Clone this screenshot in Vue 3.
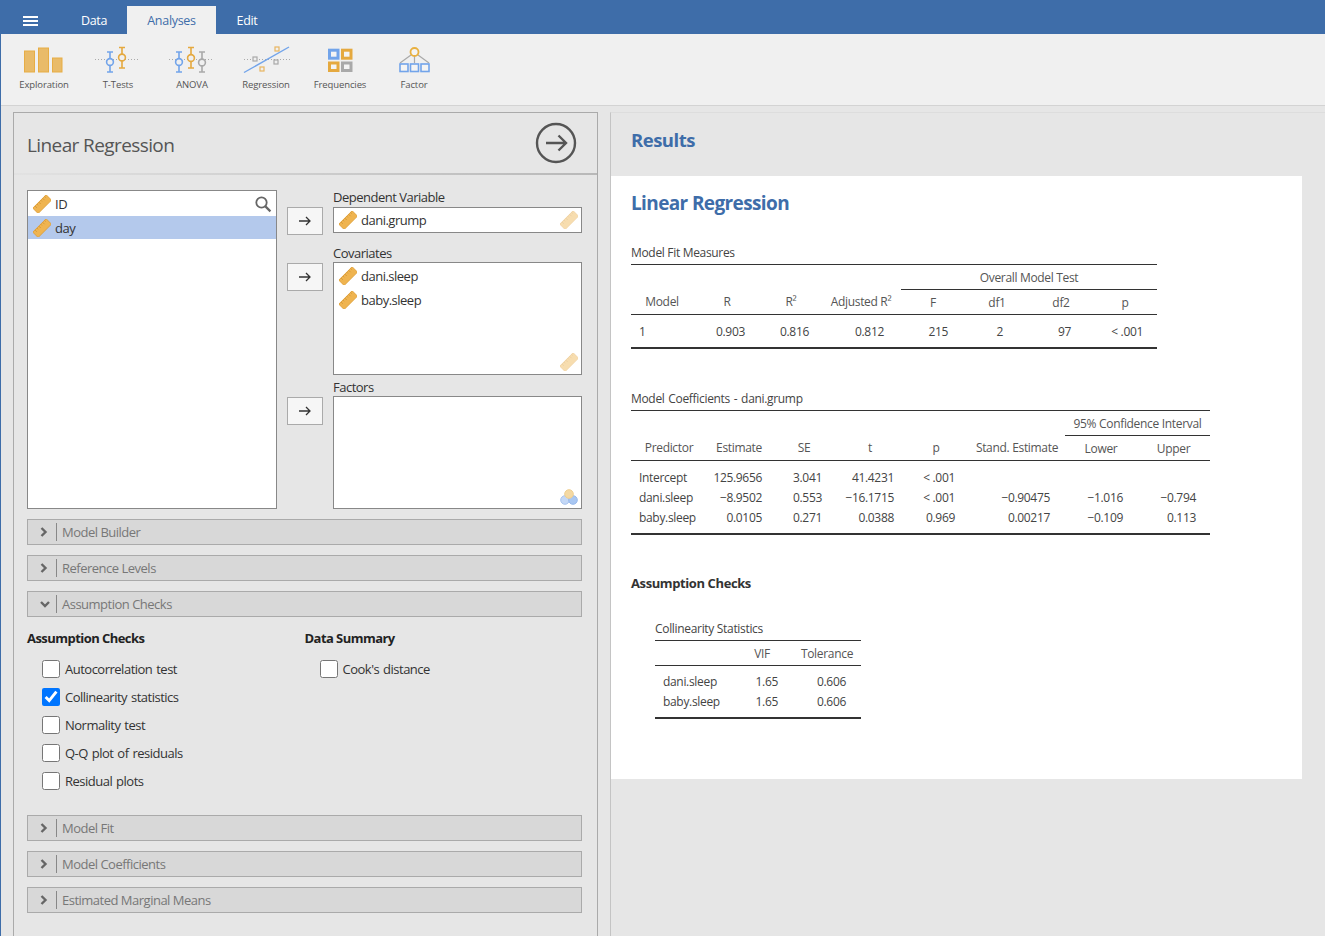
<script setup>
const ribbon = ["Exploration", "T-Tests", "ANOVA", "Regression", "Frequencies", "Factor"];

const assumptionOptions = [
    { label: "Autocorrelation test", checked: false },
    { label: "Collinearity statistics", checked: true },
    { label: "Normality test", checked: false },
    { label: "Q-Q plot of residuals", checked: false },
    { label: "Residual plots", checked: false },
];

// w = column width, pad = distance of the numbers from the right edge
const fitCols = [
    { name: "Model", w: 62, left: true },
    { name: "R", w: 68, pad: 16 },
    { name: "R²", w: 60, pad: 12 },
    { name: "Adjusted R²", w: 80, pad: 17 },
    { name: "F", w: 64, pad: 17 },
    { name: "df1", w: 64, pad: 26 },
    { name: "df2", w: 64, pad: 22 },
    { name: "p", w: 64, pad: 14 },
];
const fitRows = [["1", "0.903", "0.816", "0.812", "215", "2", "97", "< .001"]];

const coefCols = [
    { name: "Predictor", w: 76, left: true },
    { name: "Estimate", w: 64, pad: 9 },
    { name: "SE", w: 66, pad: 15 },
    { name: "t", w: 66, pad: 9 },
    { name: "p", w: 66, pad: 14 },
    { name: "Stand. Estimate", w: 96, pad: 15 },
    { name: "Lower", w: 72, pad: 14 },
    { name: "Upper", w: 73, pad: 14 },
];
const coefRows = [
    ["Intercept", "125.9656", "3.041", "41.4231", "< .001", "", "", ""],
    ["dani.sleep", "−8.9502", "0.553", "−16.1715", "< .001", "−0.90475", "−1.016", "−0.794"],
    ["baby.sleep", "0.0105", "0.271", "0.0388", "0.969", "0.00217", "−0.109", "0.113"],
];

const colliCols = [
    { name: "", w: 76, left: true },
    { name: "VIF", w: 62, pad: 15 },
    { name: "Tolerance", w: 68, pad: 15 },
];
const colliRows = [
    ["dani.sleep", "1.65", "0.606"],
    ["baby.sleep", "1.65", "0.606"],
];

function tableWidth(cols) {
    return cols.reduce((sum, c) => sum + c.w, 0) + "px";
}

function cellStyle(col) {
    return col.left ? {} : { paddingRight: col.pad + "px" };
}
</script>

<template>
    <svg class="defs" width="0" height="0">
        <defs>
            <g id="ruler">
                <g transform="rotate(-45 9 9)">
                    <rect x="-1.5" y="5" width="21" height="8.4" fill="#efb450" stroke="#e0a038" />
                    <path d="M2 5v3M5 5v2M8 5v3M11 5v2M14 5v3M17 5v2" stroke="#cf9230" stroke-width="0.8" />
                </g>
            </g>
        </defs>
    </svg>

    <div class="app">
        <div class="topbar">
            <div class="burger"><span></span><span></span><span></span></div>
            <div class="tab tab-data">Data</div>
            <div class="tab tab-analyses">Analyses</div>
            <div class="tab tab-edit">Edit</div>
        </div>

        <div class="ribbon">
            <div v-for="(name, i) in ribbon" :key="name" class="ribbon-btn">
                <svg class="ribbon-icon" width="50" height="32" viewBox="0 0 50 32">
                    <g v-if="i === 0" fill="#e9bb69" stroke="#e7ad45">
                        <rect x="5.5" y="6" width="10" height="21" />
                        <rect x="19.5" y="3" width="10" height="24" />
                        <rect x="33.5" y="13" width="9.5" height="14" />
                    </g>
                    <g v-if="i === 1" fill="none" stroke-width="1.6">
                        <path d="M2 14.5h45" stroke="#aaa" stroke-dasharray="1 2" stroke-width="1" />
                        <g stroke="#72a4ea">
                            <path d="M14 7h6M17 7v20M14 27h6" />
                            <circle cx="17" cy="17" r="3.4" fill="#f0f0f0" />
                        </g>
                        <g stroke="#e5a93f">
                            <path d="M26 2.5h6M29 2.5v20.500M26 23h6" />
                            <circle cx="29" cy="12.500" r="3.4" fill="#f0f0f0" />
                        </g>
                    </g>
                    <g v-if="i === 2" fill="none" stroke-width="1.6">
                        <path d="M2 14.5h45" stroke="#aaa" stroke-dasharray="1 2" stroke-width="1" />
                        <g stroke="#72a4ea">
                            <path d="M9 7h6M12 7v20M9 27h6" />
                            <circle cx="12" cy="17" r="3.4" fill="#f0f0f0" />
                        </g>
                        <g stroke="#e5a93f">
                            <path d="M21 2.500h6M24 2.500v20.500M21 23h6" />
                            <circle cx="24" cy="13" r="3.4" fill="#f0f0f0" />
                        </g>
                        <g stroke="#a9a9a9">
                            <path d="M32 7h6M35 7v20M32 27h6" />
                            <circle cx="35" cy="17.500" r="3.4" fill="#f0f0f0" />
                        </g>
                    </g>
                    <g v-if="i === 3" fill="none">
                        <path d="M3 14.5h46" stroke="#aaa" stroke-dasharray="1 2" />
                        <path d="M3 27.5L48 2" stroke="#72a4ea" stroke-width="1.4" />
                        <rect x="12" y="12" width="4" height="4" stroke="#a9a9a9" fill="#f0f0f0" stroke-width="1.2" />
                        <rect x="33" y="15" width="4" height="4" stroke="#a9a9a9" fill="#f0f0f0" stroke-width="1.2" />
                        <rect x="19" y="22" width="4" height="4" stroke="#e8b560" fill="#f0f0f0" stroke-width="1.2" />
                        <rect x="34" y="2" width="4" height="4" stroke="#e8b560" fill="#f0f0f0" stroke-width="1.2" />
                    </g>
                    <g v-if="i === 4" fill="#f4f4f4" stroke-width="3">
                        <rect x="14.5" y="5.2" width="8.5" height="8" stroke="#72a4ea" />
                        <rect x="27.5" y="5.2" width="8.5" height="8" stroke="#e5a93f" />
                        <rect x="14.5" y="18" width="8.5" height="7.500" stroke="#e5a93f" />
                        <rect x="27.5" y="18" width="8.5" height="7.500" stroke="#a9a9a9" />
                    </g>
                    <g v-if="i === 5" fill="none">
                        <path d="M22 10L11 18M25.500 11v7M29 10l11 8" stroke="#a9a9a9" stroke-width="1.2" />
                        <circle cx="25.500" cy="7" r="4" fill="#f4f4f4" stroke="#e8b040" stroke-width="1.8" />
                        <g fill="#f4f4f4" stroke="#72a4ea" stroke-width="1.6">
                            <rect x="11" y="19" width="8" height="7.500" />
                            <rect x="21.500" y="19" width="8" height="7.500" />
                            <rect x="32" y="19" width="8" height="7.500" />
                        </g>
                    </g>
                </svg>
                <div class="ribbon-label">{{ name }}</div>
            </div>
        </div>

        <div class="main">
            <div class="options">
                <div class="options-head">
                    <h1>Linear Regression</h1>
                    <svg class="go" width="42" height="42" viewBox="0 0 42 42" fill="none" stroke="#555">
                        <circle cx="21" cy="21" r="19" stroke-width="2.4" />
                        <path d="M11 21h20M23.500 13.500l7.500 7.500-7.500 7.500" stroke-width="2.4" />
                    </svg>
                </div>

                <div class="body">
                    <div class="supplier">
                        <div class="source">
                            <div class="var">
                                <svg class="ruler" width="18" height="18" viewBox="-1 -1 20 20"><use href="#ruler" /></svg>
                                <span>ID</span>
                                <svg class="search" width="18" height="18" viewBox="0 0 18 18" fill="none" stroke="#666" stroke-width="1.8">
                                    <circle cx="7.5" cy="7.5" r="5.2" />
                                    <path d="M11.4 11.4l5 5" stroke-width="2.2" />
                                </svg>
                            </div>
                            <div class="var selected">
                                <svg class="ruler" width="18" height="18" viewBox="-1 -1 20 20"><use href="#ruler" /></svg>
                                <span>day</span>
                            </div>
                        </div>

                        <div class="targets">
                            <div class="target-row dependent">
                                <button class="move">
                                    <svg width="14" height="12" viewBox="0 0 14 12" fill="none" stroke="#333" stroke-width="1.3"><path d="M1 6h11M8 2l4 4-4 4" /></svg>
                                </button>
                                <div class="target-col">
                                    <div class="target-label">Dependent Variable</div>
                                    <div class="target one">
                                        <div class="var">
                                            <svg class="ruler" width="18" height="18" viewBox="-1 -1 20 20"><use href="#ruler" /></svg>
                                            <span>dani.grump</span>
                                        </div>
                                        <svg class="hint" width="18" height="18" viewBox="-1 -1 20 20"><use href="#ruler" /></svg>
                                    </div>
                                </div>
                            </div>

                            <div class="target-row covariates">
                                <button class="move">
                                    <svg width="14" height="12" viewBox="0 0 14 12" fill="none" stroke="#333" stroke-width="1.3"><path d="M1 6h11M8 2l4 4-4 4" /></svg>
                                </button>
                                <div class="target-col">
                                    <div class="target-label">Covariates</div>
                                    <div class="target big">
                                        <div class="var">
                                            <svg class="ruler" width="18" height="18" viewBox="-1 -1 20 20"><use href="#ruler" /></svg>
                                            <span>dani.sleep</span>
                                        </div>
                                        <div class="var">
                                            <svg class="ruler" width="18" height="18" viewBox="-1 -1 20 20"><use href="#ruler" /></svg>
                                            <span>baby.sleep</span>
                                        </div>
                                        <svg class="hint" width="18" height="18" viewBox="-1 -1 20 20"><use href="#ruler" /></svg>
                                    </div>
                                </div>
                            </div>

                            <div class="target-row factors">
                                <button class="move">
                                    <svg width="14" height="12" viewBox="0 0 14 12" fill="none" stroke="#333" stroke-width="1.3"><path d="M1 6h11M8 2l4 4-4 4" /></svg>
                                </button>
                                <div class="target-col">
                                    <div class="target-label">Factors</div>
                                    <div class="target big">
                                        <svg class="hint hint-nominal" width="18" height="16" viewBox="0 0 18 16">
                                            <circle cx="5" cy="11" r="4.3" fill="#c4d8f6" stroke="#a9c4ee" />
                                            <circle cx="13" cy="11" r="4.3" fill="#a9c7f2" stroke="#97b9ec" />
                                            <circle cx="9" cy="5" r="4.3" fill="#f4d9a4" stroke="#efcf90" />
                                        </svg>
                                    </div>
                                </div>
                            </div>
                        </div>
                    </div>

                    <div class="section">
                        <svg class="chev" width="10" height="12" viewBox="0 0 10 12" fill="none" stroke="#666" stroke-width="2.4"><path d="M2.5 2l4 4-4 4" /></svg>
                        <span class="section-label">Model Builder</span>
                    </div>
                    <div class="section">
                        <svg class="chev" width="10" height="12" viewBox="0 0 10 12" fill="none" stroke="#666" stroke-width="2.4"><path d="M2.5 2l4 4-4 4" /></svg>
                        <span class="section-label">Reference Levels</span>
                    </div>
                    <div class="section">
                        <svg class="chev" width="12" height="12" viewBox="0 0 12 12" fill="none" stroke="#666" stroke-width="2.4"><path d="M2 4l4 4 4-4" /></svg>
                        <span class="section-label">Assumption Checks</span>
                    </div>

                    <div class="checks">
                        <div class="check-col">
                            <h3>Assumption Checks</h3>
                            <label v-for="opt in assumptionOptions" :key="opt.label" class="check">
                                <input type="checkbox" :checked="opt.checked" />
                                <span>{{ opt.label }}</span>
                            </label>
                        </div>
                        <div class="check-col">
                            <h3>Data Summary</h3>
                            <label class="check">
                                <input type="checkbox" />
                                <span>Cook's distance</span>
                            </label>
                        </div>
                    </div>

                    <div class="section">
                        <svg class="chev" width="10" height="12" viewBox="0 0 10 12" fill="none" stroke="#666" stroke-width="2.4"><path d="M2.5 2l4 4-4 4" /></svg>
                        <span class="section-label">Model Fit</span>
                    </div>
                    <div class="section">
                        <svg class="chev" width="10" height="12" viewBox="0 0 10 12" fill="none" stroke="#666" stroke-width="2.4"><path d="M2.5 2l4 4-4 4" /></svg>
                        <span class="section-label">Model Coefficients</span>
                    </div>
                    <div class="section">
                        <svg class="chev" width="10" height="12" viewBox="0 0 10 12" fill="none" stroke="#666" stroke-width="2.4"><path d="M2.5 2l4 4-4 4" /></svg>
                        <span class="section-label">Estimated Marginal Means</span>
                    </div>
                </div>
            </div>

            <div class="results">
                <div class="results-head">Results</div>
                <div class="sheet">
                    <h2>Linear Regression</h2>

                    <div class="table-title fit-title">Model Fit Measures</div>
                    <table :style="{ width: tableWidth(fitCols) }">
                        <colgroup><col v-for="c in fitCols" :key="c.name" :style="{ width: c.w + 'px' }" /></colgroup>
                        <thead>
                            <tr class="over">
                                <th colspan="4"></th>
                                <th colspan="4" class="spanner">Overall Model Test</th>
                            </tr>
                            <tr>
                                <th v-for="c in fitCols" :key="c.name">{{ c.name }}</th>
                            </tr>
                        </thead>
                        <tbody>
                            <tr v-for="(row, r) in fitRows" :key="r">
                                <td v-for="(v, i) in row" :key="i" :class="{ first: fitCols[i].left }" :style="cellStyle(fitCols[i])">{{ v }}</td>
                            </tr>
                        </tbody>
                    </table>

                    <div class="table-title coef-title">Model Coefficients - dani.grump</div>
                    <table :style="{ width: tableWidth(coefCols) }">
                        <colgroup><col v-for="c in coefCols" :key="c.name" :style="{ width: c.w + 'px' }" /></colgroup>
                        <thead>
                            <tr class="over">
                                <th colspan="6"></th>
                                <th colspan="2" class="spanner">95% Confidence Interval</th>
                            </tr>
                            <tr>
                                <th v-for="c in coefCols" :key="c.name">{{ c.name }}</th>
                            </tr>
                        </thead>
                        <tbody>
                            <tr v-for="(row, r) in coefRows" :key="r">
                                <td v-for="(v, i) in row" :key="i" :class="{ first: coefCols[i].left }" :style="cellStyle(coefCols[i])">{{ v }}</td>
                            </tr>
                        </tbody>
                    </table>

                    <h4>Assumption Checks</h4>

                    <div class="colli">
                        <div class="table-title colli-title">Collinearity Statistics</div>
                        <table :style="{ width: tableWidth(colliCols) }">
                            <colgroup><col v-for="c in colliCols" :key="c.name" :style="{ width: c.w + 'px' }" /></colgroup>
                            <thead>
                                <tr>
                                    <th v-for="c in colliCols" :key="c.name">{{ c.name }}</th>
                                </tr>
                            </thead>
                            <tbody>
                                <tr v-for="(row, r) in colliRows" :key="r">
                                    <td v-for="(v, i) in row" :key="i" :class="{ first: colliCols[i].left }" :style="cellStyle(colliCols[i])">{{ v }}</td>
                                </tr>
                            </tbody>
                        </table>
                    </div>
                </div>
            </div>
        </div>
    </div>
</template>

<style>
html,
body {
    margin: 0;
    height: 936px;
    overflow: hidden;
    background: #e6e6e6;
}
</style>

<style scoped>
.defs {
    position: absolute;
}

.app {
    height: 936px;
    overflow: hidden;
    box-sizing: border-box;
    border-left: 1px solid #3e6da9;
    font-family: "Open Sans", "Noto Sans", sans-serif;
    font-size: 13px;
    letter-spacing: -0.5px;
    color: #333;
    background: #e6e6e6;
}

.topbar {
    margin-left: -1px;
    height: 34px;
    background: #3e6da9;
    display: flex;
    align-items: flex-end;
}

.burger {
    width: 61px;
    height: 34px;
    box-sizing: border-box;
    padding: 16px 0 0 23px;
}

.burger span {
    display: block;
    width: 15px;
    height: 2px;
    margin-bottom: 2px;
    background: #fff;
}

.tab {
    height: 28px;
    line-height: 29px;
    text-align: center;
    color: #fff;
    font-size: 12.5px;
    letter-spacing: -0.3px;
}

.tab-data {
    width: 66px;
}

.tab-analyses {
    width: 89px;
    background: #f0f0f0;
    color: #3e6da9;
}

.tab-edit {
    width: 62px;
}

.ribbon {
    height: 72px;
    box-sizing: border-box;
    padding-left: 6px;
    background: #f0f0f0;
    border-bottom: 1px solid #d3d3d3;
    display: flex;
}

.ribbon-btn {
    width: 74px;
    display: flex;
    flex-direction: column;
    align-items: center;
    padding-top: 11px;
}

.ribbon-icon {
    display: block;
}

.ribbon-label {
    margin-top: 1px;
    font-size: 9.5px;
    line-height: 14px;
    letter-spacing: -0.1px;
    color: #555;
}

.main {
    display: flex;
    padding-top: 6px;
}

.options {
    margin-left: 12px;
    width: 585px;
    height: 830px;
    box-sizing: border-box;
    border: 1px solid #aaa;
    border-bottom: none;
    flex-shrink: 0;
}

.options-head {
    height: 62px;
    box-sizing: border-box;
    padding: 0 20px 0 13px;
    display: flex;
    justify-content: space-between;
    align-items: center;
    border-bottom: 2px solid;
    border-image: linear-gradient(to right, #e2e2e2, #b8b8b8) 1;
}

h1 {
    margin: 4px 0 0;
    font-size: 19px;
    font-weight: 400;
    letter-spacing: -0.6px;
    color: #555;
}

.body {
    padding: 15px 15px 0 13px;
}

.supplier {
    display: flex;
    gap: 10px;
}

.source {
    width: 250px;
    height: 319px;
    box-sizing: border-box;
    border: 1px solid #888;
    background: #fff;
    padding-top: 1px;
}

.var {
    height: 24px;
    display: flex;
    align-items: center;
    padding-left: 5px;
    gap: 4px;
    color: #333;
}

.var.selected {
    height: 23px;
    background: #b4c9ec;
}

.search {
    margin-left: auto;
    margin-right: 4px;
}

.targets {
    width: 295px;
}

.target-row {
    display: flex;
    gap: 10px;
}

.dependent .target-label {
    line-height: 14px;
}

.covariates {
    margin-top: 10px;
}

.factors {
    margin-top: 4px;
}

.move {
    width: 36px;
    height: 28px;
    margin-top: 17px;
    padding: 0;
    box-sizing: border-box;
    border: 1px solid #aaa;
    background: #f6f6f6;
    display: flex;
    align-items: center;
    justify-content: center;
}

.covariates .move,
.factors .move {
    margin-top: 18px;
}

.target-col {
    width: 249px;
}

.target-label {
    height: 17px;
    line-height: 16px;
}

.target {
    position: relative;
    box-sizing: border-box;
    border: 1px solid #888;
    background: #fff;
}

.target.one {
    height: 26px;
}

.target.big {
    height: 113px;
    padding-top: 1px;
}

.hint {
    position: absolute;
    right: 3px;
    bottom: 3px;
    opacity: 0.45;
}

.hint-nominal {
    opacity: 1;
    bottom: 3px;
}

.section {
    height: 26px;
    box-sizing: border-box;
    margin-top: 10px;
    border: 1px solid #aaa;
    background: #d8d8d8;
    display: flex;
    align-items: center;
    position: relative;
    padding-left: 34px;
}

.chev {
    position: absolute;
    left: 11px;
    top: 6px;
}

.section-label {
    color: #777;
    font-size: 13px;
}

.section::before {
    content: "";
    position: absolute;
    left: 28px;
    top: 3px;
    bottom: 3px;
    width: 1px;
    background: #888;
}

.checks {
    display: flex;
    height: 188px;
    box-sizing: border-box;
    padding-top: 12px;
}

.check-col {
    width: 278px;
}

h3 {
    margin: 0 0 8px;
    font-size: 13px;
    line-height: 18px;
    font-weight: 700;
    letter-spacing: -0.55px;
    color: #222;
}

.check {
    display: flex;
    align-items: center;
    height: 28px;
    padding-left: 15px;
    gap: 5px;
    word-spacing: 1px;
}

.check input {
    width: 18px;
    height: 18px;
    margin: 0;
    accent-color: #0075ff;
}

.results {
    margin-left: 12px;
    flex: 1;
    box-sizing: border-box;
    height: 830px;
    border-left: 1px solid #c4c4c4;
    border-top: 1px solid #ddd;
}

.results-head {
    height: 63px;
    box-sizing: border-box;
    padding: 13px 0 0 20px;
    font-size: 18.5px;
    line-height: 27px;
    font-weight: 700;
    letter-spacing: -0.5px;
    color: #3e6da9;
}

.sheet {
    width: 691px;
    height: 603px;
    box-sizing: border-box;
    background: #fff;
    padding: 14px 0 0 20px;
}

h2 {
    margin: 0;
    height: 26px;
    line-height: 26px;
    font-size: 19px;
    font-weight: 700;
    letter-spacing: -0.62px;
    color: #3e6da9;
}

.table-title {
    height: 21px;
    line-height: 19px;
    font-size: 12px;
    letter-spacing: -0.32px;
    color: #444;
}

.fit-title {
    margin-top: 27px;
}

.coef-title {
    margin-top: 40px;
    word-spacing: 1px;
}

.colli-title {
    margin-top: 0;
}

table {
    border-collapse: collapse;
    table-layout: fixed;
    border-top: 1px solid #333;
    border-bottom: 2px solid #333;
    font-size: 12px;
    letter-spacing: -0.32px;
    color: #444;
}

th {
    height: 24px;
    padding: 0;
    font-weight: 400;
    text-align: center;
    color: #555;
    border-bottom: 1px solid #333;
}

tr.over th {
    border-bottom: none;
}

tr.over th.spanner {
    border-bottom: 1px solid #333;
}

td {
    height: 20px;
    line-height: 20px;
    padding: 0;
    text-align: right;
    white-space: nowrap;
}

td.first {
    text-align: left;
    padding-left: 8px;
}

tbody tr:first-child td {
    padding-top: 7px;
}

tbody tr:last-child td {
    padding-bottom: 5px;
}

.colli tbody tr:first-child td {
    padding-top: 6px;
}

h4 {
    margin: 39px 0 0;
    height: 18px;
    line-height: 18px;
    font-size: 13px;
    font-weight: 700;
    letter-spacing: -0.4px;
    color: #333;
}

.colli {
    margin: 27px 0 0 24px;
}
</style>
